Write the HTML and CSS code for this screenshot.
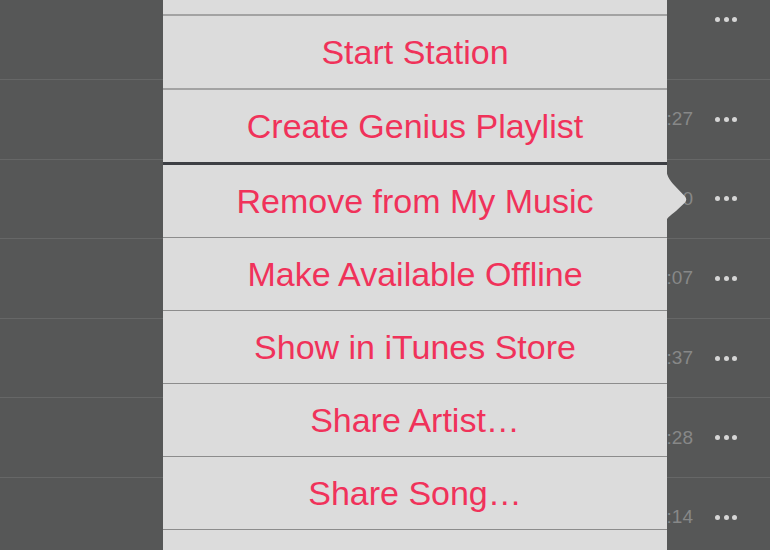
FILE: index.html
```html
<!DOCTYPE html>
<html lang="en">
<head>
    <meta charset="UTF-8">
    <meta name="viewport" content="width=device-width, initial-scale=1.0">
    <title>My Music</title>
    <link rel="stylesheet" href="styles.css">
</head>
<body>
    <div class="songs">
        <div class="song first"><span class="time"></span><span class="more"><i></i><i></i><i></i></span></div>
        <div class="song"><span class="time">4:27</span><span class="more"><i></i><i></i><i></i></span></div>
        <div class="song"><span class="time">3:50</span><span class="more"><i></i><i></i><i></i></span></div>
        <div class="song"><span class="time">4:07</span><span class="more"><i></i><i></i><i></i></span></div>
        <div class="song"><span class="time">3:37</span><span class="more"><i></i><i></i><i></i></span></div>
        <div class="song"><span class="time">4:28</span><span class="more"><i></i><i></i><i></i></span></div>
        <div class="song"><span class="time">3:14</span><span class="more"><i></i><i></i><i></i></span></div>
    </div>

    <div class="popover">
        <div class="group top">
            <button type="button">Add to Up Next</button>
            <button type="button">Start Station</button>
            <button type="button">Create Genius Playlist</button>
        </div>
        <div class="group">
            <button type="button">Remove from My Music</button>
            <button type="button">Make Available Offline</button>
            <button type="button">Show in iTunes Store</button>
            <button type="button">Share Artist…</button>
            <button type="button">Share Song…</button>
            <button type="button">Cancel</button>
        </div>
        <svg class="arrow" width="22" height="58" viewBox="0 0 22 58">
            <path d="M0 0 C0 10 3 15 9 21 L19 31.5 Q21.5 34.5 19 37.5 L10 46 C4 51 0 53 0 58 Z" fill="#dcdcdc"/>
        </svg>
    </div>
</body>
</html>
```

FILE: styles.css
```css
*{
    margin: 0;
    padding: 0;
    box-sizing: border-box;
}
html, body{
    height: 100%;
    overflow: hidden;
}
body{
    background-color: #565757;
    font-family: "Liberation Sans", Arial, sans-serif;
    position: relative;
}
.songs{
    display: flex;
    flex-direction: column;
    margin-top: -40px;
}
.song{
    height: 79.6px;
    border-bottom: 1px solid #666767;
    display: flex;
    align-items: center;
    justify-content: flex-end;
    padding-right: 33px;
}
.song.first{
    height: 120px;
}
.song .time{
    font-size: 19px;
    color: #878888;
    margin-right: 22px;
}
.song .more{
    display: flex;
    gap: 3.5px;
}
.song .more i{
    width: 5px;
    height: 5px;
    border-radius: 50%;
    background-color: #d6d6d6;
}

.popover{
    position: absolute;
    left: 163px;
    top: -58px;
    width: 504px;
    background-color: #dcdcdc;
}
.popover .group{
    display: flex;
    flex-direction: column;
}
.popover .group.top{
    border-bottom: 3px solid #3d3f44;
}
.popover button{
    height: 73px;
    border: none;
    border-bottom: 1px solid #8c8c8c;
    background-color: #dcdcdc;
    color: #f0325a;
    font-family: inherit;
    font-size: 34px;
    cursor: pointer;
}
.popover .group.top button{
    height: 74px;
    border-bottom: 2px solid #a3a3a3;
}
.popover .group.top button:last-child{
    border-bottom: none;
    height: 72px;
}
.popover .arrow{
    position: absolute;
    right: -21px;
    top: 223px;
}
```
